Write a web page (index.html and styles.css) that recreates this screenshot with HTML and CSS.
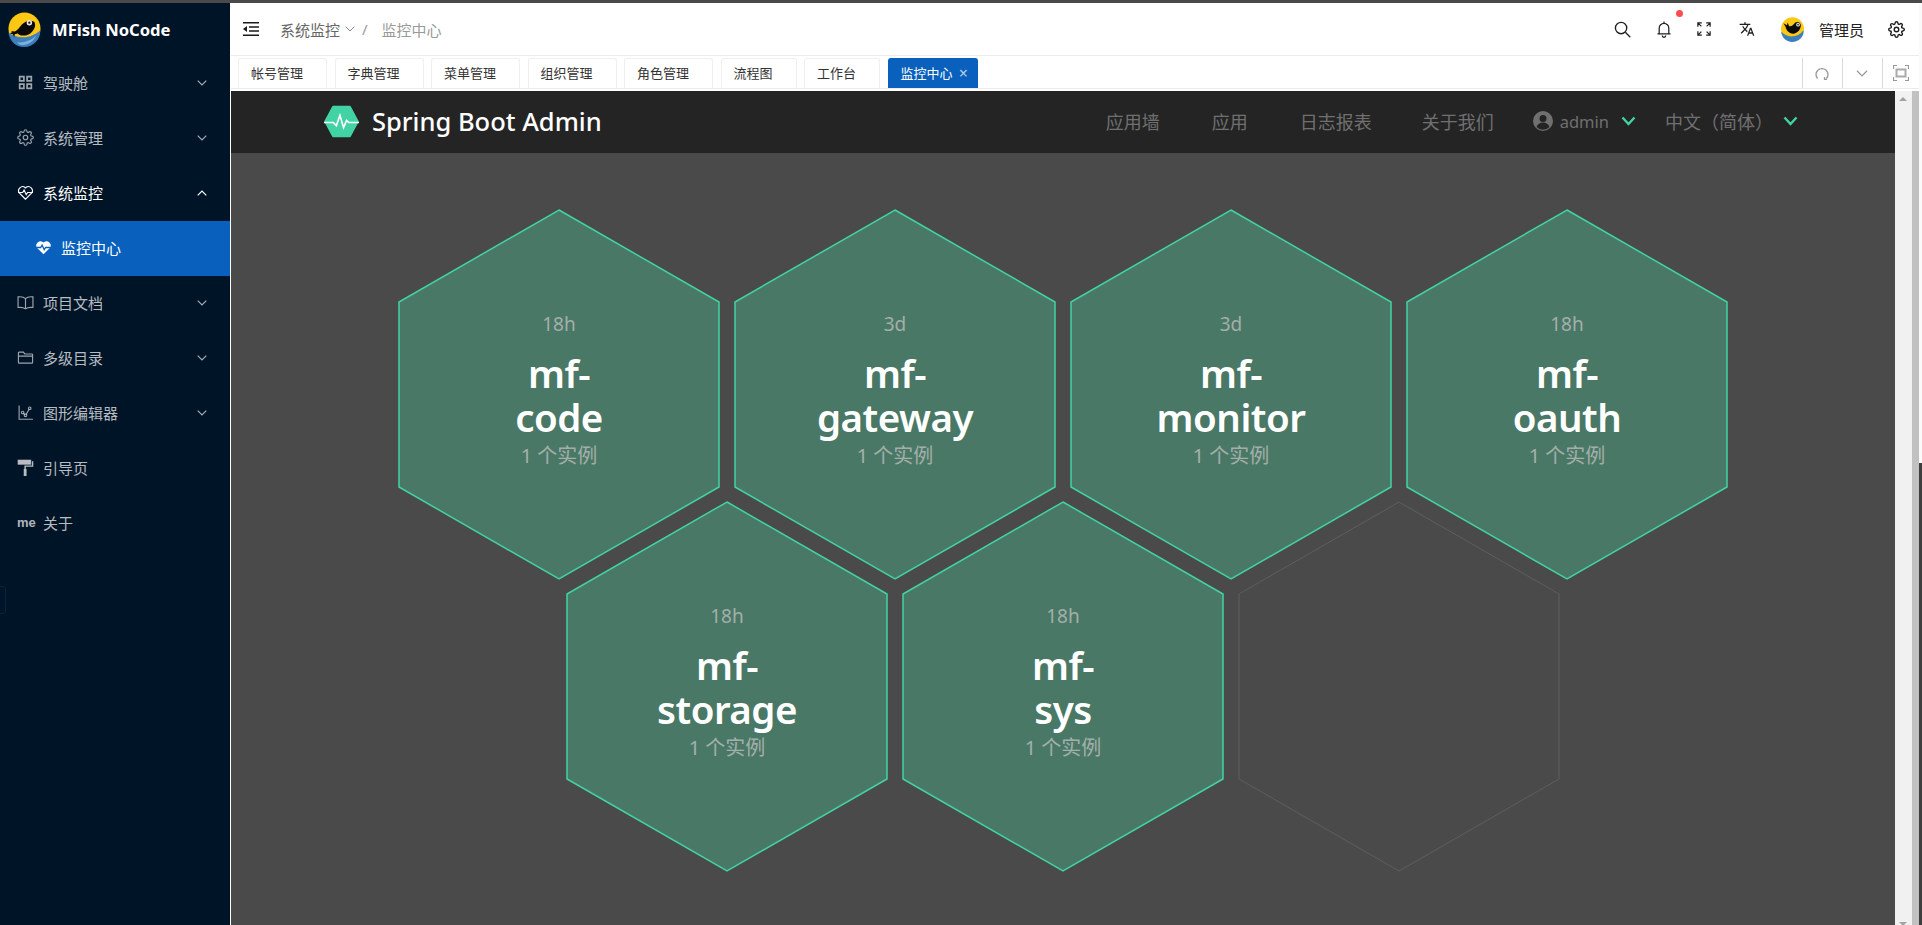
FILE: index.html
```html
<!DOCTYPE html>
<html lang="zh-CN">
<head>
  <meta charset="UTF-8">
  <meta name="viewport" content="width=device-width, initial-scale=1.0">
  <title>MFish NoCode</title>
  <link rel="stylesheet" href="styles.css">
</head>
<body>
  <svg class="defs" aria-hidden="true">
    <symbol id="gear" viewBox="0 0 24 24">
      <circle cx="12" cy="12" r="3.2"/>
      <path d="M19.4 15a1.65 1.65 0 0 0 .33 1.82l.06.06a2 2 0 0 1 0 2.83 2 2 0 0 1-2.83 0l-.06-.06a1.65 1.65 0 0 0-1.82-.33 1.65 1.65 0 0 0-1 1.51V21a2 2 0 0 1-2 2 2 2 0 0 1-2-2v-.09A1.65 1.65 0 0 0 9 19.4a1.65 1.65 0 0 0-1.82.33l-.06.06a2 2 0 0 1-2.83 0 2 2 0 0 1 0-2.83l.06-.06a1.65 1.65 0 0 0 .33-1.82 1.65 1.65 0 0 0-1.51-1H3a2 2 0 0 1-2-2 2 2 0 0 1 2-2h.09A1.65 1.65 0 0 0 4.6 9a1.65 1.65 0 0 0-.33-1.82l-.06-.06a2 2 0 0 1 0-2.83 2 2 0 0 1 2.83 0l.06.06a1.65 1.65 0 0 0 1.82.33H9a1.65 1.65 0 0 0 1-1.51V3a2 2 0 0 1 2-2 2 2 0 0 1 2 2v.09a1.65 1.65 0 0 0 1 1.51 1.65 1.65 0 0 0 1.82-.33l.06-.06a2 2 0 0 1 2.83 0 2 2 0 0 1 0 2.83l-.06.06a1.65 1.65 0 0 0-.33 1.82V9a1.65 1.65 0 0 0 1.51 1H21a2 2 0 0 1 2 2 2 2 0 0 1-2 2h-.09a1.65 1.65 0 0 0-1.51 1z"/>
    </symbol>
    <symbol id="chev-down" viewBox="0 0 10 6">
      <path d="M.7.7 5 5 9.3.7"/>
    </symbol>
    <symbol id="chev-bold" viewBox="0 0 15 10">
      <path d="M1.5 1.5 7.5 8l6-6.5"/>
    </symbol>
  </svg>

  <div class="frame-top"></div>
  <div class="window">
    <aside class="sidebar">
      <div class="brand">
        <svg class="fish-logo" viewBox="0 0 36 36">
          <circle cx="18" cy="17" r="16.5" fill="#fcc813"/>
          <path d="M1.5 21c4 3 9 5 15 5 7 0 13-3 17.500-7 1 9-7 17-16.500 17-8.500 0-15-6.500-16-15z" fill="#3d7ebd"/>
          <path d="M10 31c6 1 15-1 20-7-2 6-8 10-14 10-2 0-4-1-6-3z" fill="#7ab2dc"/>
          <path d="M4 19.500l4 .5c2-1 3-2 4-3 4-6 10-10 16-7 2 3 1 8-4 12-5 3-10 3-13 0l-3 1-.5 3-1.500-3-3-1 2.500-1.500z" fill="#0a0a0a"/>
          <circle cx="23" cy="11" r="2.800" fill="#e8e8e8"/>
          <circle cx="23" cy="11" r="1.200" fill="#222"/>
        </svg>
        <span class="brand-name">MFish NoCode</span>
      </div>
      <nav class="menu">
        <a class="menu-item">
          <svg class="menu-icon" viewBox="0 0 16 16"><path d="M2.500 2.500h4v4h-4zM9.500 2.500h4v4h-4zM2.500 9.500h4v4h-4zM9.500 9.500h4v4h-4z"/></svg>
          <span>驾驶舱</span>
          <svg class="menu-arrow"><use href="#chev-down"/></svg>
        </a>
        <a class="menu-item">
          <svg class="menu-icon"><use href="#gear"/></svg>
          <span>系统管理</span>
          <svg class="menu-arrow"><use href="#chev-down"/></svg>
        </a>
        <a class="menu-item open">
          <svg class="menu-icon" viewBox="0 0 24 24"><path d="M12 21.500 3.500 13a5.700 5.700 0 0 1 8-8l.5.500.5-.5a5.700 5.700 0 0 1 8 8z"/><path d="M1.500 12H8l2-3.500 3 6.500 2-3h7.500"/></svg>
          <span>系统监控</span>
          <svg class="menu-arrow up"><use href="#chev-down"/></svg>
        </a>
        <a class="menu-item sub active">
          <svg class="menu-icon" viewBox="0 0 24 24"><path class="heart-fill" d="M12 21.500 3 12.800a6 6 0 0 1 8.500-8.300l.5.500.5-.5A6 6 0 0 1 21 12.800z"/><path class="heart-pulse" d="M1.500 12H8l2-3.500 3 6.500 2-3h7.500"/></svg>
          <span>监控中心</span>
        </a>
        <a class="menu-item">
          <svg class="menu-icon" viewBox="0 0 24 24"><path d="M12 6.500C10 4.500 6 3.500 1.500 4v15c4-.5 8 0 10.500 2 2.500-2 6.500-2.500 10.500-2V4C18 3.500 14 4.500 12 6.500zM12 6.500V21"/></svg>
          <span>项目文档</span>
          <svg class="menu-arrow"><use href="#chev-down"/></svg>
        </a>
        <a class="menu-item">
          <svg class="menu-icon" viewBox="0 0 24 24"><path d="M2 5.500a1 1 0 0 1 1-1h6l2 2.500h10a1 1 0 0 1 1 1v11a1 1 0 0 1-1 1H3a1 1 0 0 1-1-1zM2 10h20"/></svg>
          <span>多级目录</span>
          <svg class="menu-arrow"><use href="#chev-down"/></svg>
        </a>
        <a class="menu-item">
          <svg class="menu-icon" viewBox="0 0 24 24"><path d="M3 2v19.500h19.500M8 12l4 4 6-10"/><circle cx="8" cy="12" r="1.800"/><circle cx="12" cy="16" r="1.800"/><circle cx="18" cy="6" r="1.800"/></svg>
          <span>图形编辑器</span>
          <svg class="menu-arrow"><use href="#chev-down"/></svg>
        </a>
        <a class="menu-item">
          <svg class="menu-icon solid" viewBox="0 0 24 24"><path d="M1 1h19v7H1z"/><path d="M21 3h2v8H12.500v3h-2V9h10.500z"/><path d="M9.500 14h4v10h-4z"/></svg>
          <span>引导页</span>
        </a>
        <a class="menu-item">
          <span class="me-icon">me</span>
          <span>关于</span>
        </a>
      </nav>
      <div class="collapse-handle"></div>
    </aside>

    <main class="main">
      <header class="topbar">
        <svg class="fold-icon" viewBox="0 0 16 14"><path d="M0 .75h16M6 5h10M6 9h10M0 13.250h16"/><path class="fold-tri" d="M4 4v6L0 7z"/></svg>
        <div class="crumbs">
          <span>系统监控</span>
          <svg class="crumb-arrow"><use href="#chev-down"/></svg>
          <span class="crumb-sep">/</span>
          <span class="crumb-now">监控中心</span>
        </div>
        <div class="top-actions">
          <svg class="act search" viewBox="0 0 18 18"><circle cx="7.500" cy="7.500" r="6"/><path d="m12 12 5.200 5.200"/></svg>
          <span class="bell-wrap">
            <svg class="act bell" viewBox="0 0 16 20"><path d="M8 1.500V3M2.500 15.500V9a5.500 5.500 0 0 1 11 0v6.500M.5 15.500h15M6 17.500a2 2 0 0 0 4 0"/></svg>
            <i class="bell-dot"></i>
          </span>
          <svg class="act full" viewBox="0 0 16 16"><path d="M1 5.500V1h4.500M1 1l4 4M15 5.500V1h-4.500M15 1l-4 4M1 10.500V15h4.500M1 15l4-4M15 10.500V15h-4.500M15 15l-4-4"/></svg>
          <svg class="act trans" viewBox="0 0 24 24"><path d="M12.870 15.070l-2.540-2.510.03-.03c1.740-1.940 2.980-4.170 3.710-6.530H17V4h-7V2H8v2H1v1.990h11.170C11.500 7.920 10.440 9.750 9 11.350 8.070 10.320 7.300 9.190 6.690 8h-2c.73 1.630 1.730 3.170 2.980 4.560l-5.090 5.020L4 19l5-5 3.110 3.110.76-2.040zM18.500 10h-2L12 22h2l1.120-3h4.750L21 22h2l-4.500-12zm-2.620 7l1.620-4.330L19.120 17h-3.240z"/></svg>
          <div class="user">
            <svg class="avatar" viewBox="0 0 36 36">
              <circle cx="18" cy="17" r="16.500" fill="#fcc813"/>
              <path d="M1.500 21c4 4 9 7 15 7 7 0 13-3 17.500-9 1 9-7 17-16.500 17-8.500 0-15-6.500-16-15z" fill="#3d7ebd"/>
              <path d="M5 9l5 3 1-4 2 5c3 1 6-1 9-5 4-2 8 0 8 4 0 6-5 12-11 12-5 0-10-4-11-10z" fill="#0a0a0a"/>
              <circle cx="26" cy="11" r="2.800" fill="#ddd"/>
              <circle cx="26" cy="11" r="1.200" fill="#222"/>
            </svg>
            <span>管理员</span>
          </div>
          <svg class="act cog"><use href="#gear"/></svg>
        </div>
      </header>

      <div class="tabbar">
        <div class="tabs">
          <span class="tab">帐号管理</span>
          <span class="tab">字典管理</span>
          <span class="tab">菜单管理</span>
          <span class="tab">组织管理</span>
          <span class="tab">角色管理</span>
          <span class="tab">流程图</span>
          <span class="tab">工作台</span>
          <span class="tab active">监控中心<b class="tab-x">×</b></span>
        </div>
        <div class="tab-tools">
          <div class="tool"><svg viewBox="0 0 14 14"><path d="M2.500 12.500A6 6 0 1 1 11.500 12.500M9.500 11v2.500h2.500"/></svg></div>
          <div class="tool"><svg class="tool-chev"><use href="#chev-down"/></svg></div>
          <div class="tool"><svg class="tool-fold" viewBox="0 0 16 16"><path d="M.5 4V.5H4M12 .5h3.500V4M15.500 12v3.500H12M4 15.500H.5V12"/><path class="fold-box" d="M3.500 4.500h9v7h-9z"/></svg></div>
        </div>
      </div>

      <div class="view">
        <div class="admin">
          <div class="admin-nav">
            <svg class="admin-logo" viewBox="0 0 34 32">
              <path class="logo-hex" d="M9 2h16l7.500 14L25 30H9L1.500 16z"/>
              <path class="logo-pulse" d="M0 17h9l3 3 3.500-10 3.500 12 3-7 2 2h10"/>
            </svg>
            <span class="admin-title">Spring Boot Admin</span>
            <div class="admin-links">
              <a class="admin-link">应用墙</a>
              <a class="admin-link">应用</a>
              <a class="admin-link">日志报表</a>
              <a class="admin-link">关于我们</a>
              <div class="admin-user">
                <svg class="user-icon" viewBox="0 0 20 20"><circle cx="10" cy="10" r="10" fill="#707070"/><circle cx="10" cy="7.500" r="3.500" fill="#242424"/><path d="M3.500 16c1-3 3.500-4.500 6.500-4.500s5.500 1.500 6.500 4.500a9 9 0 0 1-13 0z" fill="#242424"/></svg>
                <span class="admin-name">admin</span>
                <svg class="admin-chev"><use href="#chev-bold"/></svg>
              </div>
              <div class="admin-lang">
                <span>中文（简体）</span>
                <svg class="admin-chev"><use href="#chev-bold"/></svg>
              </div>
            </div>
          </div>

          <div class="wall">
            <div class="hex-row">
              <div class="hex">
                <svg class="hex-shape" viewBox="0 0 320 369"><polygon points="160,0 320,92 320,277 160,369 0,277 0,92"/></svg>
                <div class="hex-text"><div class="hex-time">18h</div><div class="hex-name">mf-<br>code</div><div class="hex-count">1 个实例</div></div>
              </div>
              <div class="hex">
                <svg class="hex-shape" viewBox="0 0 320 369"><polygon points="160,0 320,92 320,277 160,369 0,277 0,92"/></svg>
                <div class="hex-text"><div class="hex-time">3d</div><div class="hex-name">mf-<br>gateway</div><div class="hex-count">1 个实例</div></div>
              </div>
              <div class="hex">
                <svg class="hex-shape" viewBox="0 0 320 369"><polygon points="160,0 320,92 320,277 160,369 0,277 0,92"/></svg>
                <div class="hex-text"><div class="hex-time">3d</div><div class="hex-name">mf-<br>monitor</div><div class="hex-count">1 个实例</div></div>
              </div>
              <div class="hex">
                <svg class="hex-shape" viewBox="0 0 320 369"><polygon points="160,0 320,92 320,277 160,369 0,277 0,92"/></svg>
                <div class="hex-text"><div class="hex-time">18h</div><div class="hex-name">mf-<br>oauth</div><div class="hex-count">1 个实例</div></div>
              </div>
            </div>
            <div class="hex-row second">
              <div class="hex">
                <svg class="hex-shape" viewBox="0 0 320 369"><polygon points="160,0 320,92 320,277 160,369 0,277 0,92"/></svg>
                <div class="hex-text"><div class="hex-time">18h</div><div class="hex-name">mf-<br>storage</div><div class="hex-count">1 个实例</div></div>
              </div>
              <div class="hex">
                <svg class="hex-shape" viewBox="0 0 320 369"><polygon points="160,0 320,92 320,277 160,369 0,277 0,92"/></svg>
                <div class="hex-text"><div class="hex-time">18h</div><div class="hex-name">mf-<br>sys</div><div class="hex-count">1 个实例</div></div>
              </div>
              <div class="hex empty">
                <svg class="hex-shape" viewBox="0 0 320 369"><polygon points="160,0 320,92 320,277 160,369 0,277 0,92"/></svg>
              </div>
            </div>
          </div>
        </div>

        <div class="scrollbar">
          <div class="scroll-track"><i class="arrow-up"></i><i class="arrow-down"></i></div>
          <div class="scroll-edge"></div>
        </div>
      </div>
    </main>
    <div class="frame-right"></div>
  </div>
</body>
</html>
```

FILE: styles.css
```css
* {
  margin: 0;
  padding: 0;
  box-sizing: border-box;
}

html, body {
  height: 100%;
  overflow: hidden;
}

body {
  display: flex;
  flex-direction: column;
  font-family: "Noto Sans", "Noto Sans CJK SC", sans-serif;
  background: #fff;
  color: #333;
}

.defs {
  position: absolute;
  width: 0;
  height: 0;
}

.frame-top {
  height: 3px;
  flex: none;
  background: #4a4a4a;
}

.window {
  flex: 1;
  display: flex;
  min-height: 0;
}

.frame-right {
  width: 3px;
  flex: none;
  background: linear-gradient(#fafafa 0, #fafafa 460px, #3e3e3e 460px);
}

/* sidebar */
.sidebar {
  position: relative;
  width: 231px;
  flex: none;
  background: #001428;
  border-right: 1px solid #fff;
}

.brand {
  height: 53px;
  display: flex;
  align-items: center;
  padding-left: 7px;
  gap: 10px;
}

.fish-logo {
  width: 35px;
  height: 35px;
}

.brand-name {
  font-size: 16.6px;
  font-weight: 700;
  color: #fff;
  white-space: nowrap;
}

.menu-item {
  height: 55px;
  display: flex;
  align-items: center;
  padding: 0 0 2px 17px;
  font-size: 15px;
  color: rgba(255, 255, 255, 0.72);
}

.menu-item.open {
  color: #fff;
}

.menu-item.sub {
  padding-left: 35px;
}

.menu-item.active {
  background: #0960bd;
  color: #fff;
}

.menu-icon {
  width: 17px;
  height: 17px;
  margin-right: 9px;
  flex: none;
  fill: none;
  stroke: rgba(255, 255, 255, 0.62);
  stroke-width: 1.6;
}

.menu-item.open .menu-icon {
  stroke: #fff;
}

.menu-icon.solid {
  fill: #b9bdc3;
  stroke: none;
}

.menu-icon circle {
  fill: #001428;
}

.menu-item.active .menu-icon {
  stroke: none;
}

.heart-fill {
  fill: #fff;
}

.heart-pulse {
  fill: none;
  stroke: #0960bd;
  stroke-width: 1.8;
}

.me-icon {
  width: 17px;
  margin-right: 9px;
  font-size: 13px;
  font-weight: 700;
  color: rgba(255, 255, 255, 0.7);
  font-family: "Liberation Sans", sans-serif;
  flex: none;
}

.menu-arrow {
  width: 10px;
  height: 6px;
  margin-left: auto;
  margin-right: 23px;
  fill: none;
  stroke: rgba(255, 255, 255, 0.65);
  stroke-width: 1.2;
}

.menu-arrow.up {
  transform: rotate(180deg);
  stroke: #fff;
}

.collapse-handle {
  position: absolute;
  left: -6px;
  top: 583px;
  width: 12px;
  height: 28px;
  border: 1px solid #0b2238;
  border-radius: 3px;
}

/* top bar */
.main {
  flex: 1;
  min-width: 0;
  display: flex;
  flex-direction: column;
}

.topbar {
  height: 53px;
  flex: none;
  display: flex;
  align-items: center;
  padding-left: 12px;
  border-bottom: 1px solid #ececec;
}

.fold-icon {
  width: 16px;
  height: 14px;
  margin-right: 21px;
  fill: none;
  stroke: #1a1a1a;
  stroke-width: 1.5;
}

.fold-tri {
  fill: #1a1a1a;
  stroke: none;
}

.crumbs {
  display: flex;
  align-items: center;
  font-size: 15px;
  color: #666;
}

.crumb-arrow {
  width: 10px;
  height: 6px;
  margin-left: 5px;
  fill: none;
  stroke: #888;
  stroke-width: 1;
}

.crumb-sep {
  margin: 0 14px 0 7px;
  color: #999;
}

.crumb-now {
  color: #999;
}

.top-actions {
  margin-left: auto;
  display: flex;
  align-items: center;
  padding-right: 14px;
}

.act {
  flex: none;
  fill: none;
  stroke: #1f1f1f;
  stroke-width: 1.4;
}

.search {
  width: 17px;
  height: 17px;
}

.bell-wrap {
  position: relative;
  display: flex;
  margin-left: 26px;
}

.bell {
  width: 14px;
  height: 18px;
}

.bell-dot {
  position: absolute;
  right: -12px;
  top: -10px;
  width: 7px;
  height: 7px;
  border-radius: 50%;
  background: #ff4d4f;
}

.full {
  width: 14px;
  height: 14px;
  margin-left: 26px;
}

.trans {
  width: 16px;
  height: 16px;
  margin-left: 28px;
  fill: #1f1f1f;
  stroke: none;
}

.user {
  display: flex;
  align-items: center;
  margin-left: 25px;
  font-size: 15px;
  color: #222;
}

.avatar {
  width: 25px;
  height: 25px;
  margin-right: 14px;
}

.cog {
  width: 17px;
  height: 17px;
  margin-left: 24px;
  stroke-width: 2;
}

/* tabs */
.tabbar {
  height: 35px;
  flex: none;
  display: flex;
  align-items: flex-end;
  background: #fff;
  border-bottom: 2px solid #fff;
}

.tabs {
  flex: 1;
  display: flex;
  align-items: flex-end;
  gap: 7.5px;
  padding-left: 7px;
  height: 32px;
  border-bottom: 1px solid #ebebeb;
}

.tab {
  height: 30px;
  display: flex;
  align-items: center;
  padding: 0 23px 2px 12px;
  font-size: 13px;
  color: #333;
  border: 1px solid #efefef;
  border-bottom: 0;
  border-radius: 3px 3px 0 0;
  white-space: nowrap;
}

.tab.active {
  background: #0960bd;
  border-color: #0960bd;
  color: #fff;
  padding: 0 9px 2px 12px;
}

.tab-x {
  margin-left: 6px;
  font-weight: 400;
  font-size: 16px;
  color: #b8cfe9;
}

.tab-tools {
  display: flex;
  height: 32px;
  padding-top: 1px;
  border-bottom: 1px solid #ebebeb;
}

.tool {
  width: 40px;
  display: flex;
  align-items: center;
  justify-content: center;
  padding-right: 2px;
  border-left: 1px solid #d9d9d9;
}

.tool:last-child {
  width: 37px;
  padding-right: 0;
}

.tool svg {
  width: 14px;
  height: 14px;
  fill: none;
  stroke: #999;
  stroke-width: 1.3;
}

.tool svg.tool-chev {
  width: 12px;
  height: 7px;
  stroke-width: 1.1;
}

.tool svg.tool-fold {
  width: 16px;
  height: 16px;
  stroke-width: 1.2;
}

.tool-fold .fold-box {
  stroke-width: 2;
  stroke: #aaa;
}

/* embedded admin page */
.view {
  flex: 1;
  min-height: 0;
  display: flex;
}

.admin {
  flex: 1;
  min-width: 0;
  background: #4a4a4a;
}

.admin-nav {
  height: 62px;
  display: flex;
  align-items: center;
  padding: 0 97px 2px 93px;
  background: #242424;
}

.admin-logo {
  width: 35px;
  height: 33px;
  margin-right: 13px;
}

.logo-hex {
  fill: #42d3a5;
  stroke: #42d3a5;
  stroke-width: 2.5;
  stroke-linejoin: round;
}

.logo-pulse {
  fill: none;
  stroke: #fff;
  stroke-width: 1.6;
}

.admin-title {
  font-size: 25.5px;
  font-weight: 500;
  color: #fff;
  white-space: nowrap;
}

.admin-links {
  margin-left: auto;
  display: flex;
  align-items: center;
  font-size: 18px;
  color: #707070;
}

.admin-link {
  margin-right: 52px;
}

.admin-link:nth-child(3) {
  margin-right: 50px;
}

.admin-link:nth-child(4) {
  margin-right: 39px;
}

.admin-user, .admin-lang {
  display: flex;
  align-items: center;
}

.user-icon {
  width: 20px;
  height: 20px;
  margin-right: 7px;
}

.admin-name {
  font-size: 16.5px;
}

.admin-chev {
  width: 15px;
  height: 10px;
  margin-left: 12px;
  fill: none;
  stroke: #42d3a5;
  stroke-width: 2.4;
}

.admin-lang {
  margin-left: 29px;
}

.admin-lang .admin-chev {
  margin-left: 10px;
}

/* application wall */
.wall {
  padding: 57px 0 0 168px;
}

.hex-row {
  display: flex;
  gap: 16px;
}

.hex-row.second {
  margin: -77px 0 0 168px;
}

.hex {
  position: relative;
  width: 320px;
  height: 369px;
  flex: none;
  display: flex;
  align-items: center;
  justify-content: center;
}

.hex-shape {
  position: absolute;
  inset: 0;
  overflow: visible;
}

.hex-shape polygon {
  fill: #4a7866;
  stroke: #42d3a5;
  stroke-width: 1.5;
}

.hex.empty .hex-shape polygon {
  fill: none;
  stroke: #5e5e5e;
  stroke-width: 1;
}

.hex-text {
  position: relative;
  text-align: center;
  padding-bottom: 8px;
}

.hex-time {
  font-size: 19px;
  line-height: 24px;
  margin-bottom: 15px;
  color: #a3afaa;
}

.hex-name {
  font-size: 38.5px;
  font-weight: 600;
  letter-spacing: -0.5px;
  line-height: 44px;
  color: #fff;
}

.hex-count {
  margin-top: 4px;
  font-size: 20px;
  line-height: 26px;
  color: #a3afaa;
}

/* page scrollbar */
.scrollbar {
  width: 24px;
  flex: none;
  display: flex;
}

.scroll-track {
  position: relative;
  width: 17px;
  background: #f1f1f1;
}

.scroll-edge {
  width: 7px;
  background: #c1c1c1;
}

.arrow-up, .arrow-down {
  position: absolute;
  left: 4px;
  border-left: 4px solid transparent;
  border-right: 4px solid transparent;
}

.arrow-up {
  top: 6px;
  border-bottom: 4px solid #a3a3a3;
}

.arrow-down {
  bottom: -1px;
  border-top: 4px solid #a3a3a3;
}
```
